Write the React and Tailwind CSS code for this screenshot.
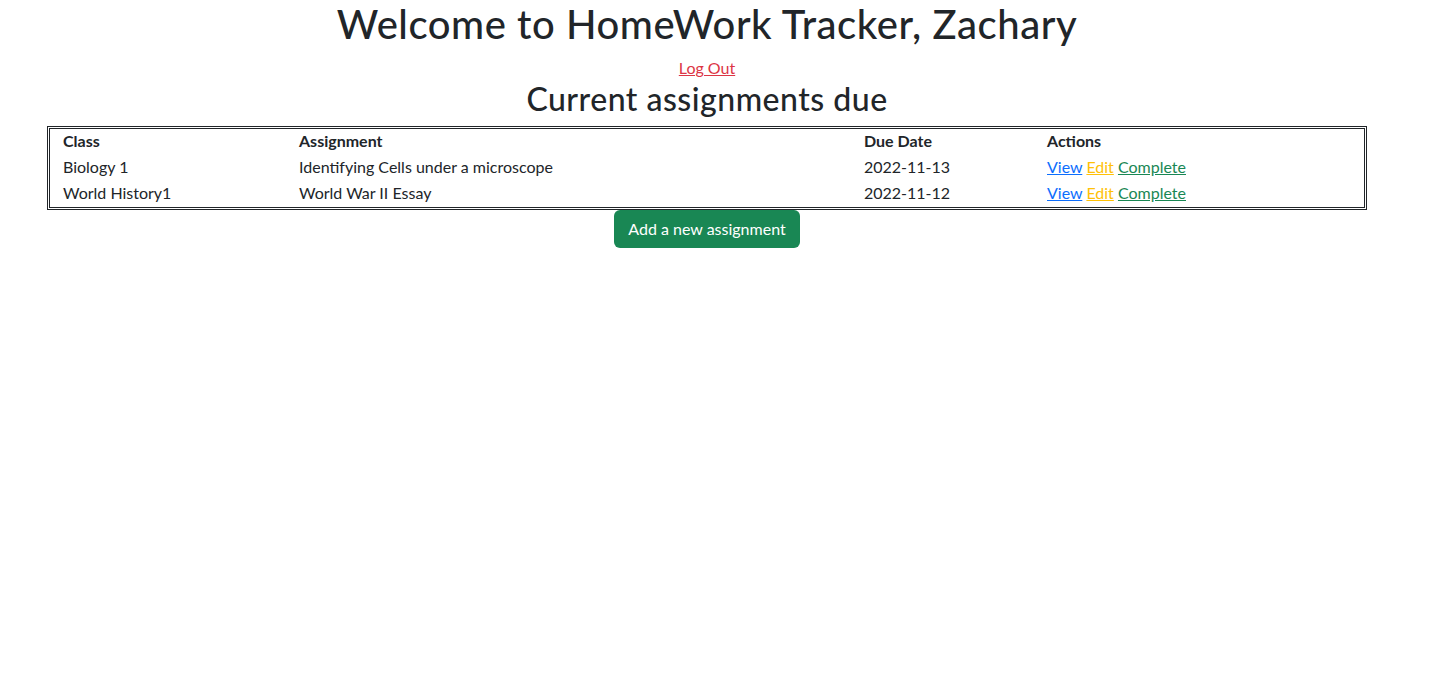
import React from "react";

const rows = [
  { cls: "Biology 1", name: "Identifying Cells under a microscope", due: "2022-11-13" },
  { cls: "World History1", name: "World War II Essay", due: "2022-11-12" }
];

export default function App() {
  return (
    <div className="min-h-screen bg-white font-['Lato','Liberation_Sans',sans-serif] text-[16px] leading-[24px] text-[#212529]">
      <div className="w-[1414px] text-center">
        <h1 className="mb-[8px] text-[40px] font-medium leading-[48px] tracking-[0.55px]">
          Welcome to HomeWork Tracker, Zachary
        </h1>
        <a href="#" className="text-[#dc3545] underline">
          Log Out
        </a>
        <h2 className="mb-[8px] text-[32px] font-medium leading-[38px] tracking-[0.5px]">
          Current assignments due
        </h2>

        <div className="mx-auto w-[1320px] border-[3px] border-double border-[#212529] text-left">
          <div className="grid h-[26px] grid-cols-[236px_565px_183px_1fr] items-center pb-[2px] pl-[13px] font-bold">
            <div>Class</div>
            <div>Assignment</div>
            <div>Due Date</div>
            <div>Actions</div>
          </div>
          {rows.map((r) => (
            <div
              key={r.cls}
              className="grid h-[26px] grid-cols-[236px_565px_183px_1fr] items-center pb-[2px] pl-[13px]"
            >
              <div>{r.cls}</div>
              <div>{r.name}</div>
              <div>{r.due}</div>
              <div>
                <a href="#" className="text-[#0d6efd] underline">View</a>{" "}
                <a href="#" className="text-[#ffc107] underline">Edit</a>{" "}
                <a href="#" className="text-[#198754] underline">Complete</a>
              </div>
            </div>
          ))}
        </div>

        <button className="h-[38px] rounded-[6px] bg-[#198754] px-[14px] text-[16px] text-white">
          Add a new assignment
        </button>
      </div>
    </div>
  );
}
